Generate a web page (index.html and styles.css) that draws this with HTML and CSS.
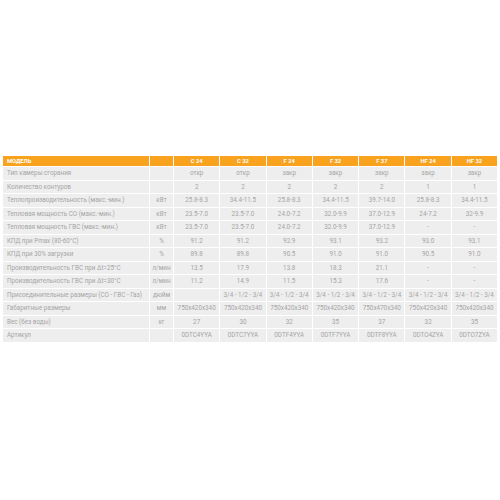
FILE: index.html
```html
<!DOCTYPE html>
<html lang="ru">
<head>
<meta charset="utf-8">
<link rel="stylesheet" href="styles.css">
</head>
<body>
<div class="page">
<table class="spec">
<colgroup><col class="c-label"><col class="c-unit"><col class="c-d"><col class="c-d"><col class="c-d"><col class="c-d"><col class="c-d"><col class="c-d"><col class="c-d"></colgroup>
<thead>
<tr><th class="label">МОДЕЛЬ</th><th></th><th>C 24</th><th>C 32</th><th>F 24</th><th>F 32</th><th>F 37</th><th>HF 24</th><th>HF 32</th></tr>
</thead>
<tbody>
<tr><td class="label">Тип камеры сгорания</td><td></td><td>откр</td><td>откр</td><td>закр</td><td>закр</td><td>закр</td><td>закр</td><td>закр</td></tr>
<tr><td class="label">Количество контуров</td><td></td><td>2</td><td>2</td><td>2</td><td>2</td><td>2</td><td>1</td><td>1</td></tr>
<tr><td class="label">Теплопроизводительность (макс.-мин.)</td><td>кВт</td><td>25.8-8.3</td><td>34.4-11.5</td><td>25.8-8.3</td><td>34.4-11.5</td><td>39.7-14.0</td><td>25.8-8.3</td><td>34.4-11.5</td></tr>
<tr><td class="label">Тепловая мощность СО (макс.-мин.)</td><td>кВт</td><td>23.5-7.0</td><td>23.5-7.0</td><td>24.0-7.2</td><td>32.0-9.9</td><td>37.0-12.9</td><td>24-7.2</td><td>32-9.9</td></tr>
<tr><td class="label">Тепловая мощность ГВС (макс.-мин.)</td><td>кВт</td><td>23.5-7.0</td><td>23.5-7.0</td><td>24.0-7.2</td><td>32.0-9.9</td><td>37.0-12.9</td><td>-</td><td>-</td></tr>
<tr><td class="label">КПД при Pmax (80-60°C)</td><td>%</td><td>91.2</td><td>91.2</td><td>92.9</td><td>93.1</td><td>93.2</td><td>93.0</td><td>93.1</td></tr>
<tr><td class="label">КПД при 30% загрузки</td><td>%</td><td>89.8</td><td>89.8</td><td>90.5</td><td>91.0</td><td>91.0</td><td>90.5</td><td>91.0</td></tr>
<tr><td class="label">Производительность ГВС при Δt=25°C</td><td>л/мин</td><td>13.5</td><td>17.9</td><td>13.8</td><td>18.3</td><td>21.1</td><td>-</td><td>-</td></tr>
<tr><td class="label">Производительность ГВС при Δt=30°C</td><td>л/мин</td><td>11.2</td><td>14.9</td><td>11.5</td><td>15.3</td><td>17.6</td><td>-</td><td>-</td></tr>
<tr><td class="label">Присоединительные размеры (СО - ГВС - Газ)</td><td>дюйм</td><td></td><td>3/4 - 1/2 - 3/4</td><td>3/4 - 1/2 - 3/4</td><td>3/4 - 1/2 - 3/4</td><td>3/4 - 1/2 - 3/4</td><td>3/4 - 1/2 - 3/4</td><td>3/4 - 1/2 - 3/4</td></tr>
<tr><td class="label">Габаритные размеры</td><td>мм</td><td>750x420x340</td><td>750x420x340</td><td>750x420x340</td><td>750x420x340</td><td>750x470x340</td><td>750x420x340</td><td>750x420x340</td></tr>
<tr><td class="label">Вес (без воды)</td><td>кг</td><td>27</td><td>30</td><td>32</td><td>35</td><td>37</td><td>32</td><td>35</td></tr>
<tr><td class="label">Артикул</td><td></td><td>0DTC4YYA</td><td>0DTC7YYA</td><td>0DTF4YYA</td><td>0DTF7YYA</td><td>0DTF8YYA</td><td>0DTO4ZYA</td><td>0DTO7ZYA</td></tr>
</tbody>
</table>
</div>
</body>
</html>
```
FILE: styles.css
```css
html, body {
  margin: 0;
  padding: 0;
  background: #ffffff;
}
.page {
  padding: 155px 3px 0 2px;
}
.spec {
  width: 495px;
  table-layout: fixed;
  border-collapse: collapse;
  font-family: Roboto, "Liberation Sans", sans-serif;
  font-size: 6.3px;
  color: #a5a5a5;
}
.c-label { width: 147px; }
.c-unit { width: 24px; }
.c-d { width: 46.3px; }
.spec th, .spec td {
  border: 1px solid #ffffff;
  text-align: center;
  white-space: nowrap;
  overflow: hidden;
  padding: 0;
}
.spec thead th {
  background: #f8a21d;
  color: #ffffff;
  font-weight: 700;
  height: 10px;
  font-size: 5.8px;
}
.spec tbody td {
  background: #eeeeee;
  height: 12.5px;
}
.spec .label {
  text-align: left;
  padding-left: 4px;
}
```
